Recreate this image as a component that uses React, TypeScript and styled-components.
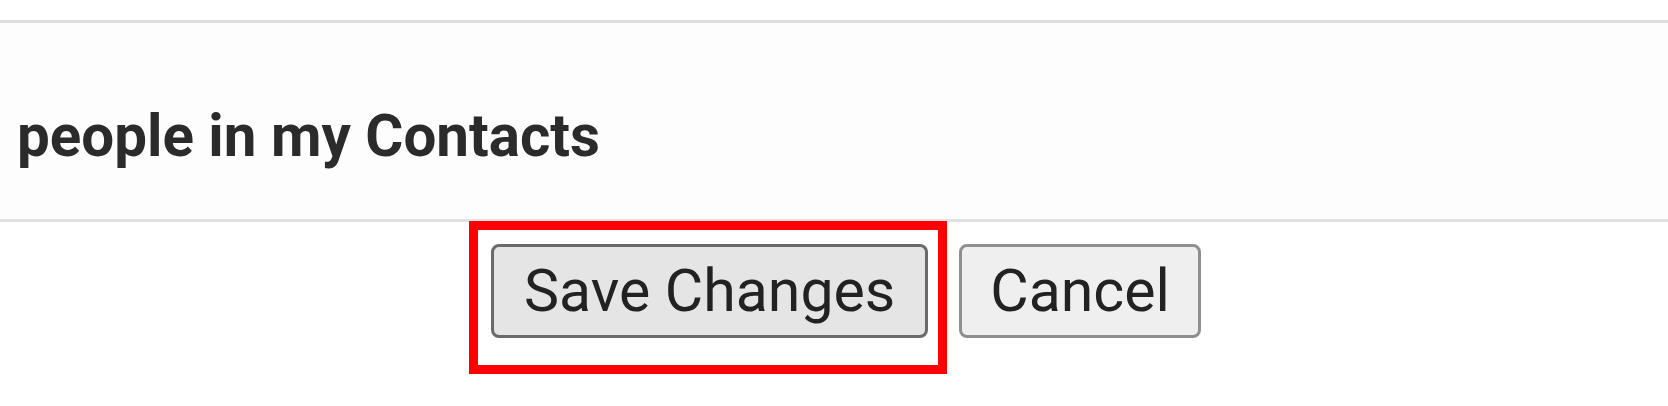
import styled, { createGlobalStyle } from 'styled-components';

const GlobalStyle = createGlobalStyle`
  html, body {
    margin: 0;
    padding: 0;
    background: #ffffff;
    font-family: Roboto, "Liberation Sans", Arial, sans-serif;
  }
`;

const Page = styled.div`
  width: 1668px;
  height: 406px;
  padding-top: 20px;
  box-sizing: border-box;
  overflow: hidden;
`;

const Panel = styled.section`
  height: 196px;
  box-sizing: content-box;
  border-top: 3px solid #dedede;
  border-bottom: 3px solid #e2e2e2;
  background: #fdfdfd;
  padding-left: 17px;
  display: flex;
  align-items: flex-start;
`;

const OptionLabel = styled.div`
  margin-top: 84px;
  font-size: 58.3px;
  line-height: 58px;
  font-weight: 700;
  color: #2b2b2b;
  white-space: nowrap;
`;

const Actions = styled.div`
  display: flex;
  align-items: flex-start;
  gap: 12px;
  margin-top: -1px;
  padding-left: 469px;
`;

const Highlight = styled.div`
  border: 9px solid #ff0000;
  padding: 14px 10px 27px 13px;
`;

const Button = styled.button<{ $primary?: boolean }>`
  font-family: Roboto, "Liberation Sans", Arial, sans-serif;
  font-size: 59px;
  line-height: 58px;
  color: #222222;
  padding: 15px ${({ $primary }) => ($primary ? '30px' : '28px')} 15px;
  border: 3px solid ${({ $primary }) => ($primary ? '#6a6a6a' : '#8f8f8f')};
  border-radius: 8px;
  background: ${({ $primary }) => ($primary ? '#e5e5e5' : '#efefef')};
  cursor: pointer;
  white-space: nowrap;
`;

const CancelButton = styled(Button)`
  margin-top: 23px;
`;

export default function App() {
  return (
    <>
      <GlobalStyle />
      <Page>
        <Panel>
          <OptionLabel>people in my Contacts</OptionLabel>
        </Panel>
        <Actions>
          <Highlight>
            <Button $primary>Save Changes</Button>
          </Highlight>
          <CancelButton>Cancel</CancelButton>
        </Actions>
      </Page>
    </>
  );
}
